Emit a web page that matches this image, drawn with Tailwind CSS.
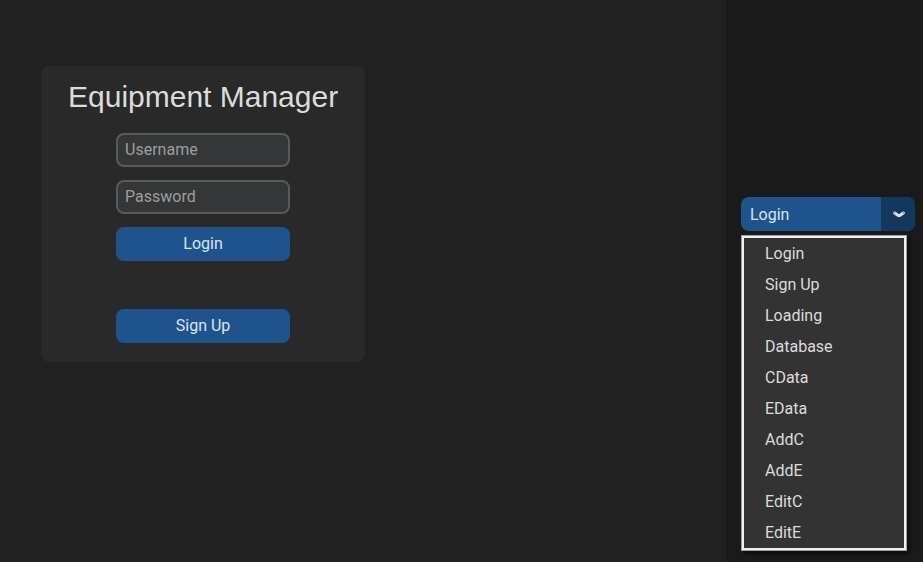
<!DOCTYPE html>
<html lang="en">
<head>
<meta charset="utf-8">
<meta name="viewport" content="width=device-width, initial-scale=1">
<title>Equipment Manager</title>
<script src="https://cdn.jsdelivr.net/npm/@tailwindcss/browser@4"></script>
</head>
<body class="flex min-h-screen bg-[#212121] font-[Roboto,sans-serif] text-base text-[#dce4ee]">
  <main class="flex flex-1 items-start px-[41px] py-[66px]">
    <form class="flex flex-col items-center rounded-lg bg-[#292929] px-[27px] pt-[13px] pb-[19px]">
      <h1 class="font-['Liberation_Sans',sans-serif] text-[30px] leading-9 text-[#dcdcdc]">Equipment Manager</h1>
      <div class="mt-[18px] flex w-[174px] flex-col gap-[13px]">
        <input type="text" aria-label="Username" placeholder="Username" class="h-[34px] w-full rounded-lg border-2 border-[#565b5e] bg-[#343638] px-[7px] pb-[2px] placeholder:text-[#9e9e9e]">
        <input type="password" aria-label="Password" placeholder="Password" class="h-[34px] w-full rounded-lg border-2 border-[#565b5e] bg-[#343638] px-[7px] pb-[2px] placeholder:text-[#9e9e9e]">
        <button type="submit" class="h-[34px] rounded-lg bg-[#1f538d]">Login</button>
        <button type="button" class="mt-[35px] h-[34px] rounded-lg bg-[#1f538d]">Sign Up</button>
      </div>
    </form>
  </main>
  <aside class="w-[196px] bg-[#1a1a1a] pt-[197px] pr-2 pl-[14px]">
    <div class="relative">
      <select aria-label="Page" class="block h-[34px] w-full appearance-none rounded-lg bg-[#1f538d] pt-[2px] pl-[9px]">
        <option>Login</option>
        <option>Sign Up</option>
        <option>Loading</option>
        <option>Database</option>
        <option>CData</option>
        <option>EData</option>
        <option>AddC</option>
        <option>AddE</option>
        <option>EditC</option>
        <option>EditE</option>
      </select>
      <span class="pointer-events-none absolute inset-y-0 right-0 flex w-[34px] items-center justify-center rounded-r-lg bg-[#14375e]">
        <svg class="ml-[2px] h-3 w-3" viewBox="0 0 12 12" fill="none" stroke="#dce4ee" stroke-width="3" stroke-linecap="round" stroke-linejoin="round" aria-hidden="true"><path d="M1.6 5 L4.6 7.1 Q6 7.8 7.4 7.1 L10.4 5"/><path d="M1.6 5h.1M10.3 5h.1" stroke="#14375e" stroke-width="1"/></svg>
      </span>
      <ul role="listbox" aria-label="Pages" class="absolute top-[38px] left-0 w-[166px] border border-[#a0a0a0] bg-[#333333] p-[2px] text-[#dcdcdc] shadow-[3px_3px_3px_rgba(0,0,0,0.5)] ring-2 ring-[#f0f0f0] ring-inset">
        <li role="option" aria-selected="true" class="h-[31px] pl-[21px] leading-[31px]">Login</li>
        <li role="option" class="h-[31px] pl-[21px] leading-[31px]">Sign Up</li>
        <li role="option" class="h-[31px] pl-[21px] leading-[31px]">Loading</li>
        <li role="option" class="h-[31px] pl-[21px] leading-[31px]">Database</li>
        <li role="option" class="h-[31px] pl-[21px] leading-[31px]">CData</li>
        <li role="option" class="h-[31px] pl-[21px] leading-[31px]">EData</li>
        <li role="option" class="h-[31px] pl-[21px] leading-[31px]">AddC</li>
        <li role="option" class="h-[31px] pl-[21px] leading-[31px]">AddE</li>
        <li role="option" class="h-[31px] pl-[21px] leading-[31px]">EditC</li>
        <li role="option" class="h-[31px] pl-[21px] leading-[31px]">EditE</li>
      </ul>
    </div>
  </aside>
</body>
</html>
